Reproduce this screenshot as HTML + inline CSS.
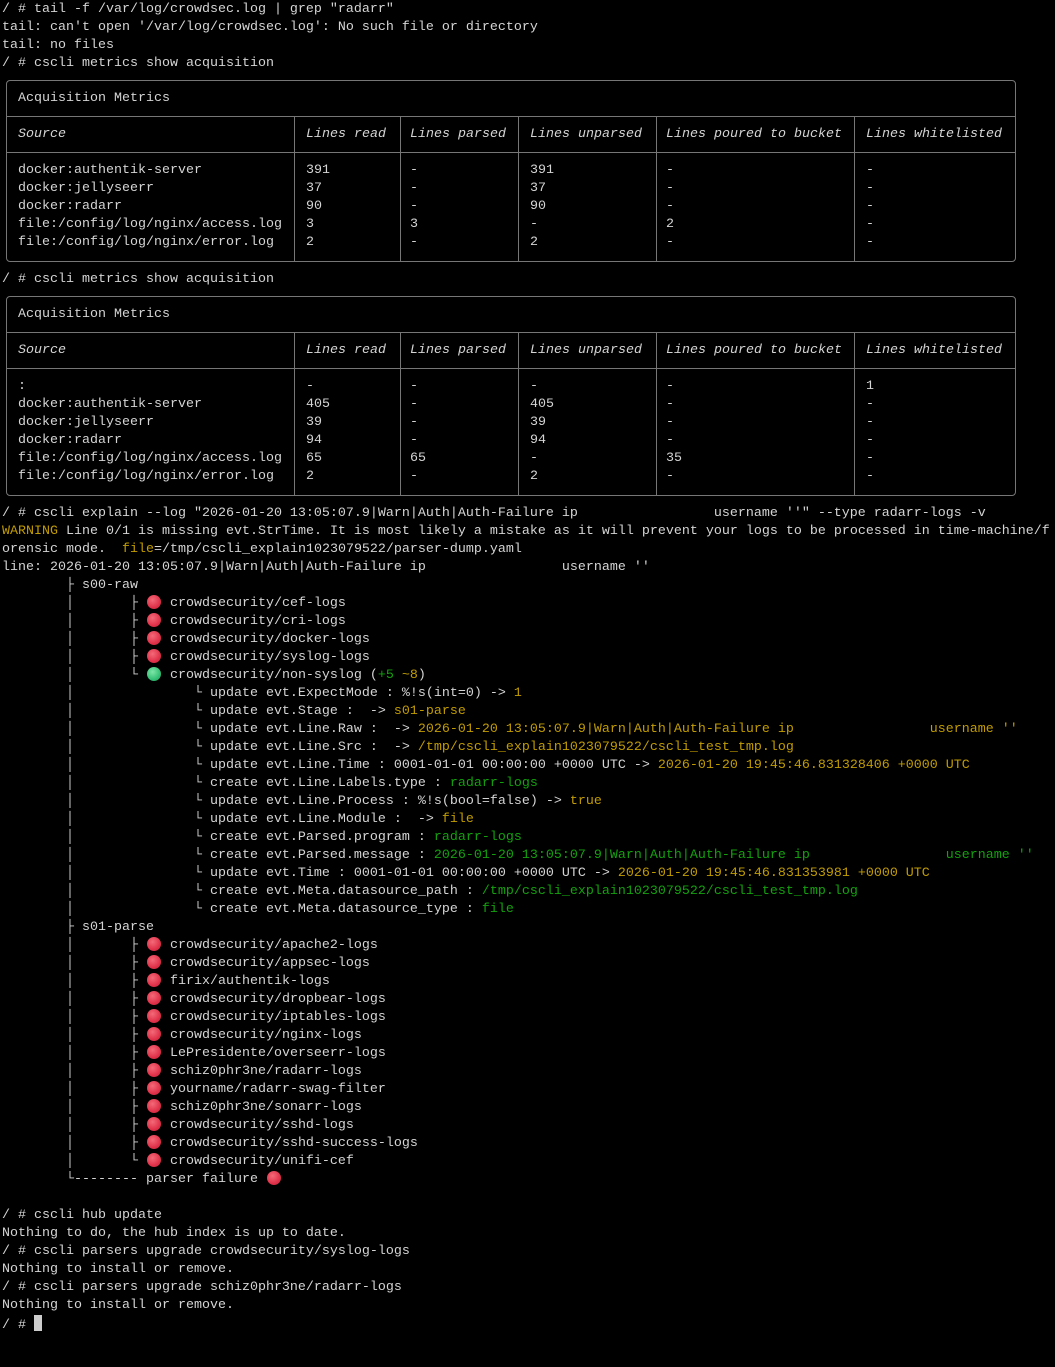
<!DOCTYPE html>
<html><head><meta charset="utf-8">
<style>
html,body{margin:0;padding:0;background:#000;}
body{width:1055px;height:1367px;position:relative;overflow:hidden;color:#d4d4d4;font-family:"Liberation Mono","DejaVu Sans Mono",monospace;font-size:13.33px;}
pre{position:absolute;left:2px;top:1px;margin:0;font:inherit;line-height:18px;white-space:pre;}
.y{color:#c19c00}.g{color:#13a10e}
i.r,i.gr{display:inline-block;width:16px;height:13px;vertical-align:-2px;position:relative;}
i.r:before,i.gr:before{content:"";position:absolute;left:1px;top:0;width:14px;height:14px;border-radius:50%;}
i.r:before{background:radial-gradient(circle at 40% 35%,#f36a78,#e0324a 60%,#b81f35);}
i.gr:before{background:radial-gradient(circle at 40% 35%,#7de6a8,#35c076 60%,#1f9556);}
.box{position:absolute;left:6px;width:1008px;border:1px solid #767676;border-radius:4px;}
.h{position:absolute;left:6px;width:1009px;height:1px;background:#767676;}
.v{position:absolute;width:1px;background:#767676;}
.c{position:absolute;line-height:18px;white-space:pre;}
.it{font-style:italic}
.cur{display:inline-block;width:8px;height:16px;background:#cccccc;vertical-align:-3px;}
</style></head><body>
<pre>/ # tail -f /var/log/crowdsec.log | grep "radarr"
tail: can't open '/var/log/crowdsec.log': No such file or directory
tail: no files
/ # cscli metrics show acquisition











/ # cscli metrics show acquisition












/ # cscli explain --log "2026-01-20 13:05:07.9|Warn|Auth|Auth-Failure ip                 username ''" --type radarr-logs -v
<span class="y">WARNING</span> Line 0/1 is missing evt.StrTime. It is most likely a mistake as it will prevent your logs to be processed in time-machine/f
orensic mode.  <span class="y">file</span>=/tmp/cscli_explain1023079522/parser-dump.yaml
line: 2026-01-20 13:05:07.9|Warn|Auth|Auth-Failure ip                 username ''
        ├ s00-raw
        │       ├ <i class="r"></i> crowdsecurity/cef-logs
        │       ├ <i class="r"></i> crowdsecurity/cri-logs
        │       ├ <i class="r"></i> crowdsecurity/docker-logs
        │       ├ <i class="r"></i> crowdsecurity/syslog-logs
        │       └ <i class="gr"></i> crowdsecurity/non-syslog (<span class="g">+5</span> <span class="y">~8</span>)
        │               └ update evt.ExpectMode : %!s(int=0) -> <span class="y">1</span>
        │               └ update evt.Stage :  -> <span class="y">s01-parse</span>
        │               └ update evt.Line.Raw :  -> <span class="y">2026-01-20 13:05:07.9|Warn|Auth|Auth-Failure ip                 username ''</span>
        │               └ update evt.Line.Src :  -> <span class="y">/tmp/cscli_explain1023079522/cscli_test_tmp.log</span>
        │               └ update evt.Line.Time : 0001-01-01 00:00:00 +0000 UTC -> <span class="y">2026-01-20 19:45:46.831328406 +0000 UTC</span>
        │               └ create evt.Line.Labels.type : <span class="g">radarr-logs</span>
        │               └ update evt.Line.Process : %!s(bool=false) -> <span class="y">true</span>
        │               └ update evt.Line.Module :  -> <span class="y">file</span>
        │               └ create evt.Parsed.program : <span class="g">radarr-logs</span>
        │               └ create evt.Parsed.message : <span class="g">2026-01-20 13:05:07.9|Warn|Auth|Auth-Failure ip                 username ''</span>
        │               └ update evt.Time : 0001-01-01 00:00:00 +0000 UTC -> <span class="y">2026-01-20 19:45:46.831353981 +0000 UTC</span>
        │               └ create evt.Meta.datasource_path : <span class="g">/tmp/cscli_explain1023079522/cscli_test_tmp.log</span>
        │               └ create evt.Meta.datasource_type : <span class="g">file</span>
        ├ s01-parse
        │       ├ <i class="r"></i> crowdsecurity/apache2-logs
        │       ├ <i class="r"></i> crowdsecurity/appsec-logs
        │       ├ <i class="r"></i> firix/authentik-logs
        │       ├ <i class="r"></i> crowdsecurity/dropbear-logs
        │       ├ <i class="r"></i> crowdsecurity/iptables-logs
        │       ├ <i class="r"></i> crowdsecurity/nginx-logs
        │       ├ <i class="r"></i> LePresidente/overseerr-logs
        │       ├ <i class="r"></i> schiz0phr3ne/radarr-logs
        │       ├ <i class="r"></i> yourname/radarr-swag-filter
        │       ├ <i class="r"></i> schiz0phr3ne/sonarr-logs
        │       ├ <i class="r"></i> crowdsecurity/sshd-logs
        │       ├ <i class="r"></i> crowdsecurity/sshd-success-logs
        │       └ <i class="r"></i> crowdsecurity/unifi-cef
        └-------- parser failure <i class="r"></i>

/ # cscli hub update
Nothing to do, the hub index is up to date.
/ # cscli parsers upgrade crowdsecurity/syslog-logs
Nothing to install or remove.
/ # cscli parsers upgrade schiz0phr3ne/radarr-logs
Nothing to install or remove.
/ # <span class="cur"></span></pre>

<div class="box" style="top:80px;height:180px"></div>
<div class="h" style="top:116px"></div>
<div class="h" style="top:152px"></div>
<div class="v" style="left:294px;top:116px;height:145px"></div>
<div class="v" style="left:400px;top:116px;height:145px"></div>
<div class="v" style="left:518px;top:116px;height:145px"></div>
<div class="v" style="left:656px;top:116px;height:145px"></div>
<div class="v" style="left:854px;top:116px;height:145px"></div>
<div class="c" style="left:18px;top:90px">Acquisition Metrics</div>
<div class="c it" style="left:18px;top:126px">Source</div>
<div class="c it" style="left:306px;top:126px">Lines read</div>
<div class="c it" style="left:410px;top:126px">Lines parsed</div>
<div class="c it" style="left:530px;top:126px">Lines unparsed</div>
<div class="c it" style="left:666px;top:126px">Lines poured to bucket</div>
<div class="c it" style="left:866px;top:126px">Lines whitelisted</div>
<div class="c" style="left:18px;top:162px">docker:authentik-server
docker:jellyseerr
docker:radarr
file:/config/log/nginx/access.log
file:/config/log/nginx/error.log</div>
<div class="c" style="left:306px;top:162px">391
37
90
3
2</div>
<div class="c" style="left:410px;top:162px">-
-
-
3
-</div>
<div class="c" style="left:530px;top:162px">391
37
90
-
2</div>
<div class="c" style="left:666px;top:162px">-
-
-
2
-</div>
<div class="c" style="left:866px;top:162px">-
-
-
-
-</div>

<div class="box" style="top:296px;height:198px"></div>
<div class="h" style="top:332px"></div>
<div class="h" style="top:368px"></div>
<div class="v" style="left:294px;top:332px;height:163px"></div>
<div class="v" style="left:400px;top:332px;height:163px"></div>
<div class="v" style="left:518px;top:332px;height:163px"></div>
<div class="v" style="left:656px;top:332px;height:163px"></div>
<div class="v" style="left:854px;top:332px;height:163px"></div>
<div class="c" style="left:18px;top:306px">Acquisition Metrics</div>
<div class="c it" style="left:18px;top:342px">Source</div>
<div class="c it" style="left:306px;top:342px">Lines read</div>
<div class="c it" style="left:410px;top:342px">Lines parsed</div>
<div class="c it" style="left:530px;top:342px">Lines unparsed</div>
<div class="c it" style="left:666px;top:342px">Lines poured to bucket</div>
<div class="c it" style="left:866px;top:342px">Lines whitelisted</div>
<div class="c" style="left:18px;top:378px">:
docker:authentik-server
docker:jellyseerr
docker:radarr
file:/config/log/nginx/access.log
file:/config/log/nginx/error.log</div>
<div class="c" style="left:306px;top:378px">-
405
39
94
65
2</div>
<div class="c" style="left:410px;top:378px">-
-
-
-
65
-</div>
<div class="c" style="left:530px;top:378px">-
405
39
94
-
2</div>
<div class="c" style="left:666px;top:378px">-
-
-
-
35
-</div>
<div class="c" style="left:866px;top:378px">1
-
-
-
-
-</div>
</body></html>
